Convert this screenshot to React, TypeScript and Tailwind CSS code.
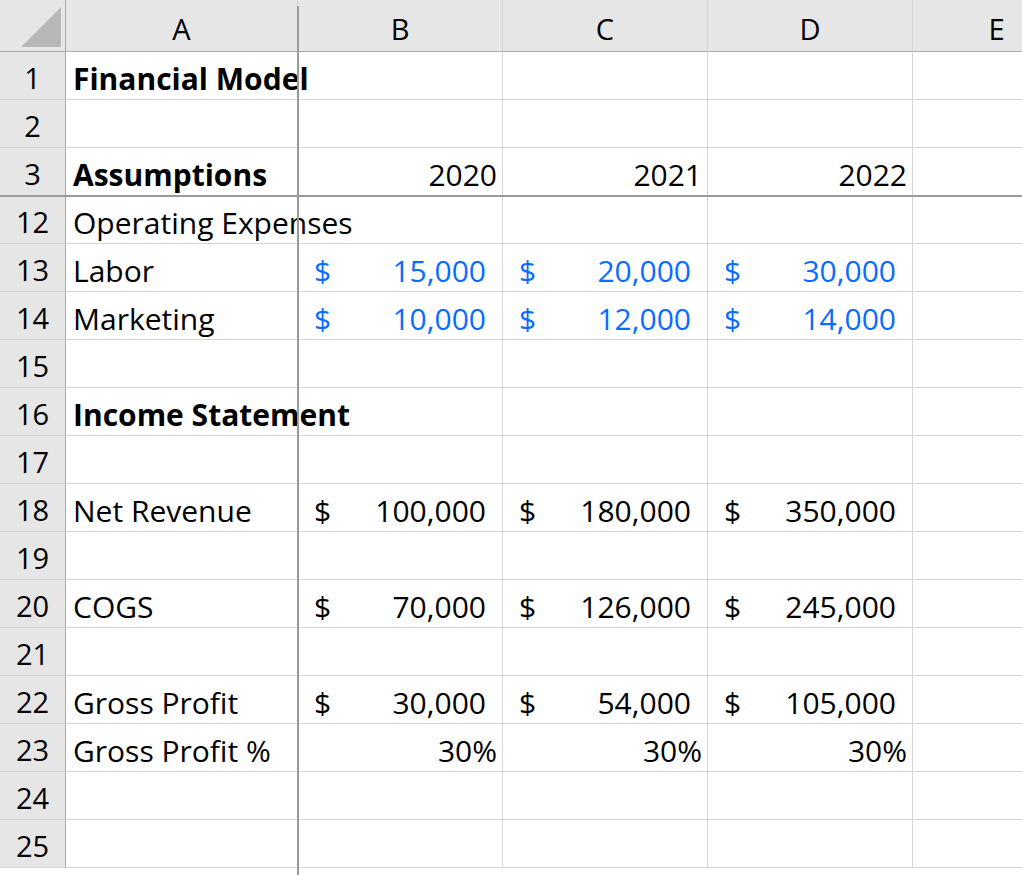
import React from "react";

type Cell = { t?: string; bold?: boolean; kind?: "text" | "acct" | "right"; blue?: boolean };
const rows: { n: string; c: Cell[] }[] = [
  { n: "1", c: [{ t: "Financial Model", bold: true }] },
  { n: "2", c: [] },
  { n: "3", c: [{ t: "Assumptions", bold: true }, { t: "2020", kind: "right" }, { t: "2021", kind: "right" }, { t: "2022", kind: "right" }] },
  { n: "12", c: [{ t: "Operating Expenses" }] },
  { n: "13", c: [{ t: "Labor" }, { t: "15,000", kind: "acct", blue: true }, { t: "20,000", kind: "acct", blue: true }, { t: "30,000", kind: "acct", blue: true }] },
  { n: "14", c: [{ t: "Marketing" }, { t: "10,000", kind: "acct", blue: true }, { t: "12,000", kind: "acct", blue: true }, { t: "14,000", kind: "acct", blue: true }] },
  { n: "15", c: [] },
  { n: "16", c: [{ t: "Income Statement", bold: true }] },
  { n: "17", c: [] },
  { n: "18", c: [{ t: "Net Revenue" }, { t: "100,000", kind: "acct" }, { t: "180,000", kind: "acct" }, { t: "350,000", kind: "acct" }] },
  { n: "19", c: [] },
  { n: "20", c: [{ t: "COGS" }, { t: "70,000", kind: "acct" }, { t: "126,000", kind: "acct" }, { t: "245,000", kind: "acct" }] },
  { n: "21", c: [] },
  { n: "22", c: [{ t: "Gross Profit" }, { t: "30,000", kind: "acct" }, { t: "54,000", kind: "acct" }, { t: "105,000", kind: "acct" }] },
  { n: "23", c: [{ t: "Gross Profit %" }, { t: "30%", kind: "right" }, { t: "30%", kind: "right" }, { t: "30%", kind: "right" }] },
  { n: "24", c: [] },
  { n: "25", c: [] },
];

function renderCell(c: Cell | undefined, i: number) {
  const base = "h-[48px] border-r border-b border-[#d4d4d4] flex items-center pt-[5px] text-[30px] whitespace-nowrap";
  if (!c || !c.t) return <div key={i} className={base} />;
  const color = c.blue ? "text-[#0a6cff]" : "text-black";
  if (c.kind === "acct")
    return (
      <div key={i} className={`${base} ${color} pl-[16px] pr-[16px] justify-between`}>
        <span>$</span>
        <span>{c.t}</span>
      </div>
    );
  if (c.kind === "right")
    return <div key={i} className={`${base} ${color} justify-end pr-[5px]`}>{c.t}</div>;
  return (
    <div key={i} className={`${base} ${color} pl-[7px] ${c.bold ? "font-bold" : ""}`}>
      {c.t}
    </div>
  );
}

export default function App() {
  return (
    <div className="relative w-[1022px] h-[875px] overflow-hidden bg-white" style={{ fontFamily: '"Open Sans", sans-serif' }}>
      <div className="grid grid-cols-[66px_232px_205px_205px_205px_168px] overflow-visible">
        <div className="h-[52px] bg-[#e6e6e6] border-r border-b border-[#ababab] relative">
          <div className="absolute right-[4px] bottom-[4px] w-0 h-0 border-l-[40px] border-l-transparent border-b-[40px] border-b-[#b7b7b7]" />
        </div>
        {["A", "B", "C", "D", "E"].map((h) => (
          <div key={h} className="h-[52px] bg-[#e6e6e6] border-r border-b border-r-[#d4d4d4] border-b-[#ababab] flex items-center justify-center pt-[6px] text-[29px] text-black">
            {h}
          </div>
        ))}
        {rows.map((r) => (
          <React.Fragment key={r.n}>
            <div className="h-[48px] bg-[#e6e6e6] border-r border-b border-r-[#ababab] border-b-[#d4d4d4] flex items-center justify-center pt-[5px] text-[29px] text-black">
              {r.n}
            </div>
            {[0, 1, 2, 3, 4].map((i) => renderCell(r.c[i], i))}
          </React.Fragment>
        ))}
      </div>
      <div className="absolute left-[297px] top-[6px] w-[2px] h-[869px] bg-[#9a9a9a]" />
      <div className="absolute left-0 top-[195px] h-[2px] w-[1022px] bg-[#9a9a9a]" />
    </div>
  );
}
